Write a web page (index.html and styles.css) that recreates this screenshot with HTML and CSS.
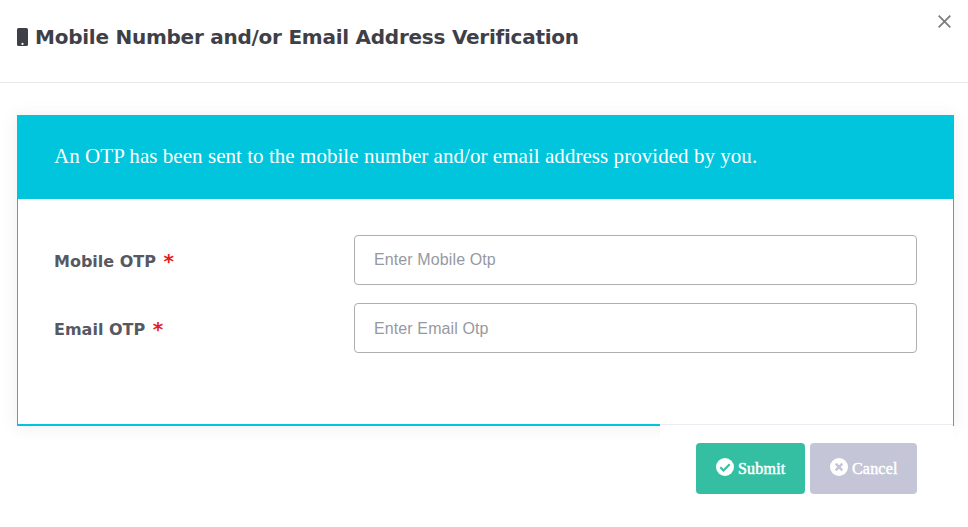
FILE: index.html
```html
<!DOCTYPE html>
<html lang="en">
<head>
  <meta charset="UTF-8">
  <meta name="viewport" content="width=device-width, initial-scale=1.0">
  <title>Mobile Number and/or Email Address Verification</title>
  <link rel="stylesheet" href="styles.css">
</head>
<body>
  <div class="modal-header">
    <svg class="icon-mobile" viewBox="0 0 11 18">
      <path fill="currentColor" fill-rule="evenodd" d="M1.6 0h7.8A1.6 1.6 0 0 1 11 1.6v14.8A1.6 1.6 0 0 1 9.400 18H1.600A1.600 1.600 0 0 1 0 16.400V1.600A1.600 1.600 0 0 1 1.600 0zM5.500 14.800a1.100 1.100 0 1 0 0 2.200a1.100 1.100 0 0 0 0-2.200z"/>
    </svg>
    <h1>Mobile Number and/or Email Address Verification</h1>
    <button class="close" type="button" aria-label="Close">
      <svg viewBox="0 0 13 13"><path d="M.7.7l11.600 11.600M12.300.7L.7 12.300" stroke="currentColor" stroke-width="1.800" fill="none"/></svg>
    </button>
  </div>

  <form class="modal-body">
    <div class="card">
      <div class="card-title">An OTP has been sent to the mobile number and/or email address provided by you.</div>
      <div class="card-body">
        <div class="form-row">
          <label for="mobile-otp">Mobile OTP <span class="required">*</span></label>
          <input type="text" id="mobile-otp" placeholder="Enter Mobile Otp">
        </div>
        <div class="form-row">
          <label for="email-otp">Email OTP <span class="required">*</span></label>
          <input type="text" id="email-otp" placeholder="Enter Email Otp">
        </div>
      </div>
    </div>
    <div class="modal-footer">
      <button type="button" class="btn btn-submit">
        <svg viewBox="0 0 18 18"><circle cx="9" cy="9" r="9" fill="#fff"/><path d="M4.300 9.300l3.200 3.200 6.200-6.200" fill="none" stroke="#34bfa3" stroke-width="2.100"/></svg>
        <span>Submit</span>
      </button>
      <button type="button" class="btn btn-cancel">
        <svg viewBox="0 0 18 18"><circle cx="9" cy="9" r="9" fill="#fff"/><path d="M5.700 5.700l6.600 6.600M12.300 5.700l-6.600 6.600" fill="none" stroke="#c4c5d6" stroke-width="2.400"/></svg>
        <span>Cancel</span>
      </button>
    </div>
  </form>
</body>
</html>
```
FILE: styles.css
```css
* {
  box-sizing: border-box;
}
body {
  margin: 0;
  height: 527px;
  background: #fff;
  overflow: hidden;
}
.modal-header {
  display: flex;
  align-items: flex-start;
  height: 83px;
  padding: 24px 17px 0;
  border-bottom: 1px solid #e9e9eb;
  color: #3f4047;
}
.icon-mobile {
  width: 11px;
  height: 18px;
  margin: 4px 7px 0 0;
}
h1 {
  margin: 0;
  font: bold 20px/26px "DejaVu Sans", Verdana, sans-serif;
  letter-spacing: -0.25px;
  white-space: nowrap;
}
.close {
  margin: -9px 0 0 auto;
  padding: 0;
  border: none;
  background: none;
  color: #7d7d7d;
  line-height: 0;
  cursor: pointer;
}
.close svg {
  width: 13px;
  height: 13px;
}
.modal-body {
  padding: 32px 14px 0 17px;
}
.card {
  height: 311px;
  border: 1px solid #00c5dc;
  border-top: none;
  border-bottom-width: 2px;
  box-shadow: 0 1px 15px 1px rgba(69, 65, 78, 0.08);
}
.card-title {
  height: 84px;
  padding: 0 36px;
  background: #00c5dc;
  color: #fff;
  font: 21px/83px "Liberation Serif", "Times New Roman", serif;
  letter-spacing: 0.045px;
}
.card-body {
  padding: 36px;
}
.form-row {
  display: flex;
  align-items: center;
  margin-bottom: 18px;
}
label {
  width: 300px;
  padding-top: 3px;
  font: bold 16px/24px "DejaVu Sans", Verdana, sans-serif;
  color: #575962;
}
.required {
  margin-left: 2px;
  color: #e61d1d;
  font-size: 20px;
  line-height: 16px;
  vertical-align: -1px;
}
input {
  flex: 1;
  height: 50px;
  padding: 0 19px;
  border: 1px solid #afafaf;
  border-radius: 4px;
  font: 16px "Liberation Sans", Arial, sans-serif;
  letter-spacing: 0.11px;
}
#email-otp {
  padding-top: 2px;
}
input::placeholder {
  color: #9699a2;
}
.modal-footer {
  position: relative;
  display: flex;
  gap: 5px;
  width: 293px;
  height: 90px;
  margin: -2px 1px 0 auto;
  padding: 18px 36px 0;
  border-top: 1px solid #ebedf2;
  background: #fff;
}
.btn {
  display: flex;
  align-items: center;
  gap: 4px;
  height: 51px;
  padding: 0 0 0 20px;
  border: none;
  border-radius: 4px;
  color: #fff;
  font: 16px "Liberation Serif", serif;
  letter-spacing: 0.2px;
  -webkit-text-stroke: 0.5px #fff;
  cursor: pointer;
}
.btn svg {
  width: 18px;
  height: 18px;
  margin-top: -3px;
}
.btn-submit {
  width: 109px;
  background: #34bfa3;
}
.btn-cancel {
  width: 107px;
  background: #c4c5d6;
}
```
